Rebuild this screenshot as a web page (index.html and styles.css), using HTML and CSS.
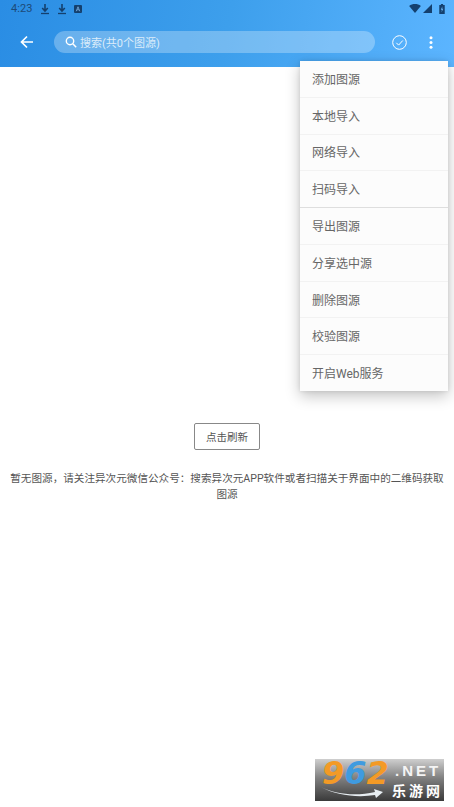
FILE: index.html
```html
<!DOCTYPE html>
<html lang="zh">
<head>
<meta charset="utf-8">
<title>图源</title>
<link rel="stylesheet" href="styles.css">
</head>
<body>
<div class="page">
  <header class="appbar">
    <div class="status">
      <div class="status-left">
        <span class="time">4:23</span>
        <svg class="si" width="10" height="12" viewBox="0 0 10 12"><path d="M5 1v6.500M2.200 5 5 8l2.800-3" fill="none" stroke="#14406e" stroke-width="1.600"/><path d="M1 10.500h8" stroke="#14406e" stroke-width="1.300"/></svg>
        <svg class="si" width="10" height="12" viewBox="0 0 10 12"><path d="M5 1v6.500M2.200 5 5 8l2.800-3" fill="none" stroke="#14406e" stroke-width="1.600"/><path d="M1 10.500h8" stroke="#14406e" stroke-width="1.300"/></svg>
        <svg class="si" width="8" height="8" viewBox="0 0 9 9"><rect width="9" height="9" rx="1.200" fill="#14406e"/><path d="M2.500 7 4.500 2l2 5M3.300 5.400h2.400" fill="none" stroke="#7fb2e2" stroke-width=".9"/></svg>
      </div>
      <div class="status-right">
        <svg width="12" height="9" viewBox="0 0 13 10"><path d="M0 2.200C3.600-.7 9.400-.7 13 2.200L6.500 10z" fill="#14406e"/></svg>
        <svg width="9" height="9" viewBox="0 0 10 10"><path d="M10 0v10H0z" fill="#14406e"/></svg>
        <svg class="batt" width="6" height="10" viewBox="0 0 6 11"><path d="M1.800 0h2.400v1H6v10H0V1h1.800z" fill="#14406e"/><path d="M3.400 2.500 1.700 6.200h1.200L2.500 9l1.900-3.700H3.200z" fill="#6fb9f7"/></svg>
      </div>
    </div>
    <div class="toolbar">
      <svg class="back" width="14" height="14" viewBox="0 0 14 14"><path d="M13 7H1.800M7 1.500 1.500 7 7 12.500" fill="none" stroke="#fff" stroke-width="1.700"/></svg>
      <div class="search">
        <svg width="12" height="12" viewBox="0 0 12 12"><circle cx="5" cy="5" r="3.700" fill="none" stroke="#fff" stroke-width="1.400"/><path d="m7.800 7.800 3.400 3.400" stroke="#fff" stroke-width="1.500"/></svg>
        <span class="search-text">搜索(共0个图源)</span>
      </div>
      <svg class="check" width="15" height="15" viewBox="0 0 15 15"><circle cx="7.500" cy="7.500" r="6.800" fill="none" stroke="#fff" stroke-width="1"/><path d="m4.300 7.800 2.300 2.300 4.200-4.600" fill="none" stroke="#fff" stroke-width="1"/></svg>
      <svg class="more" width="4" height="13" viewBox="0 0 4 13"><circle cx="2" cy="1.700" r="1.500" fill="#fff"/><circle cx="2" cy="6.500" r="1.500" fill="#fff"/><circle cx="2" cy="11.300" r="1.500" fill="#fff"/></svg>
    </div>
  </header>
  <main class="content">
    <button class="refresh">点击刷新</button>
    <p class="empty">暂无图源，请关注异次元微信公众号：搜索异次元APP软件或者扫描关于界面中的二维码获取图源</p>
  </main>
  <ul class="menu">
    <li>添加图源</li>
    <li>本地导入</li>
    <li>网络导入</li>
    <li class="strong">扫码导入</li>
    <li>导出图源</li>
    <li>分享选中源</li>
    <li>删除图源</li>
    <li>校验图源</li>
    <li>开启Web服务</li>
  </ul>
  <div class="mark">
    <div class="mark-num"><span class="o">9</span><span class="b">6</span><span class="o">2</span></div>
    <div class="mark-side">
      <span class="net">.NET</span>
      <span class="cn">乐游网</span>
    </div>
    <svg class="swoosh" width="62" height="12" viewBox="0 0 62 12"><path d="M0 1C16 9 36 10 54 6L53 3l9 3-7 6-1-3C36 12 14 9 0 1z" fill="#e8eef2"/></svg>
  </div>
</div>
</body>
</html>
```

FILE: styles.css
```css
* { box-sizing: border-box; }
html, body { margin: 0; padding: 0; }
body {
  width: 454px;
  height: 807px;
  overflow: hidden;
  background: #fff;
  font-family: Roboto, "Noto Sans CJK SC", sans-serif;
}
.page { position: relative; width: 454px; height: 807px; overflow: hidden; }
.appbar {
  height: 67px;
  background: linear-gradient(100deg, #2a8de4 0%, #3d9fec 50%, #5cb5ff 100%);
  display: flex;
  flex-direction: column;
}
.status {
  height: 17px;
  padding: 0 9px 0 11px;
  display: flex;
  justify-content: space-between;
  align-items: center;
}
.status-left { display: flex; align-items: center; }
.time { font-size: 11px; color: #1d4a78; width: 29px; letter-spacing: 0.100px; }
.si { margin-right: 7px; flex: none; }
.status-right { display: flex; align-items: center; gap: 2px; }
.batt { margin-left: 5px; }
.toolbar {
  flex: 1;
  display: flex;
  align-items: center;
  padding: 0 0 0 20px;
}
.back { flex: none; }
.search {
  margin-left: 20px;
  width: 321px;
  height: 22px;
  border-radius: 11px;
  background: rgba(255, 255, 255, 0.28);
  display: flex;
  align-items: center;
  padding-left: 11px;
  gap: 3px;
}
.search-text { font-size: 11px; color: #dcecfa; }
.check { margin-left: 17px; flex: none; }
.more { margin-left: 22px; flex: none; }
.content {
  padding-top: 356px;
  display: flex;
  flex-direction: column;
  align-items: center;
}
.refresh {
  width: 66px;
  height: 27px;
  padding: 0;
  background: #fff;
  border: 1px solid #888;
  border-radius: 2px;
  font: 10.500px Roboto, "Noto Sans CJK SC", sans-serif;
  color: #555;
}
.empty {
  margin: 21px 0 0;
  padding: 0 8px;
  width: 454px;
  text-align: center;
  font-size: 10.600px;
  line-height: 16px;
  color: #555;
}
.menu {
  position: absolute;
  left: 300px;
  top: 61px;
  width: 148px;
  height: 330px;
  margin: 0;
  padding: 0;
  list-style: none;
  background: #fcfcfc;
  box-shadow: 0 5px 14px rgba(0, 0, 0, 0.24), 0 0 4px rgba(0, 0, 0, 0.1);
  display: flex;
  flex-direction: column;
}
.menu li {
  flex: 1;
  display: flex;
  align-items: center;
  padding: 0 0 1px 12px;
  font-size: 12px;
  color: #666;
  border-bottom: 1px solid #f2f2f2;
}
.menu li.strong { border-bottom-color: #dedede; }
.menu li:last-child { border-bottom: 0; }
.mark {
  position: absolute;
  left: 315px;
  top: 759px;
  width: 129px;
  height: 42px;
  background: linear-gradient(180deg, #cfcfcf 0%, #808080 45%, #3a3a3a 100%);
  display: flex;
}
.mark-num {
  font: italic bold 32px/28px "DejaVu Sans", sans-serif;
  letter-spacing: 0;
  margin-left: 7px;
  width: 71px;
  height: 28px;
  flex: none;
  white-space: nowrap;
}
.o { color: #f39a26; }
.b { color: #3f9be0; }
.mark-side { display: flex; flex-direction: column; }
.net {
  font: bold 15px/14px "Liberation Sans", sans-serif;
  letter-spacing: 3px;
  color: #f4f4f4;
  margin-top: 5px;
  margin-left: 2px;
}
.cn {
  font: bold 14px/15px "Noto Sans CJK SC", sans-serif;
  letter-spacing: 3px;
  color: #fff;
  margin-top: 5px;
  margin-left: -1px;
  white-space: nowrap;
}
.swoosh { position: absolute; left: 6px; top: 27px; }
```
